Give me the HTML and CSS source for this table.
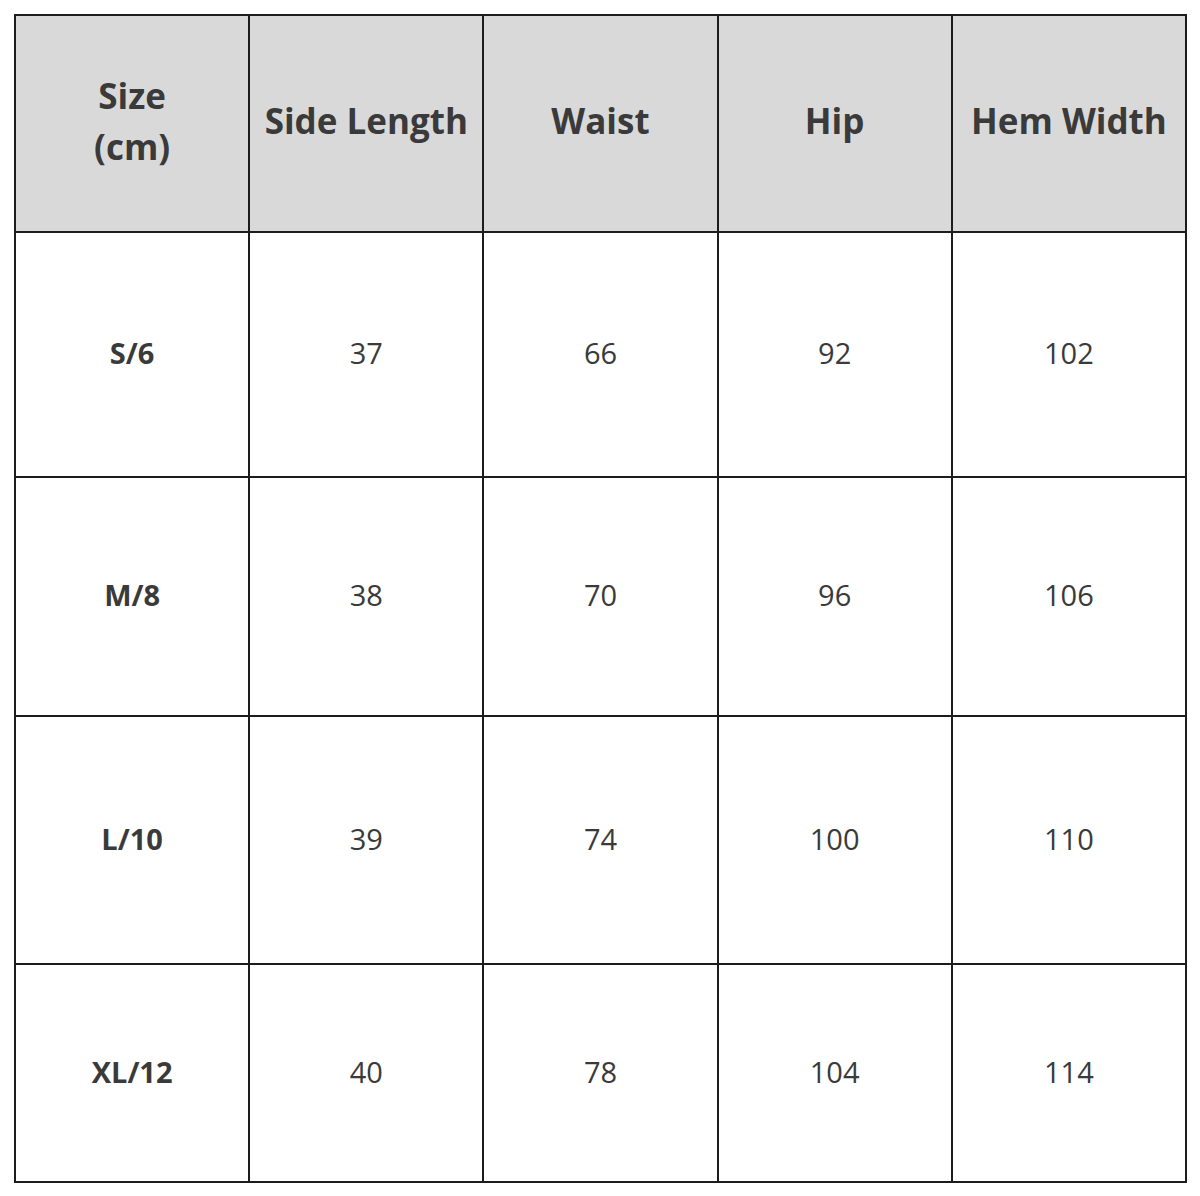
FILE: index.html
```html
<!DOCTYPE html>
<html>
<head>
<meta charset="utf-8">
<link rel="stylesheet" href="styles.css">
</head>
<body>
<table class="size-table">
  <colgroup>
    <col><col><col><col><col>
  </colgroup>
  <thead>
    <tr class="head-row">
      <th>Size<br>(cm)</th>
      <th>Side Length</th>
      <th>Waist</th>
      <th>Hip</th>
      <th>Hem Width</th>
    </tr>
  </thead>
  <tbody>
    <tr class="row-1"><td class="size">S/6</td><td>37</td><td>66</td><td>92</td><td>102</td></tr>
    <tr class="row-2"><td class="size">M/8</td><td>38</td><td>70</td><td>96</td><td>106</td></tr>
    <tr class="row-3"><td class="size">L/10</td><td>39</td><td>74</td><td>100</td><td>110</td></tr>
    <tr class="row-4"><td class="size">XL/12</td><td>40</td><td>78</td><td>104</td><td>114</td></tr>
  </tbody>
</table>
</body>
</html>
```

FILE: styles.css
```css
html, body {
  margin: 0;
  padding: 0;
  background: #ffffff;
}

body {
  padding: 14px 0 0 14px;
  font-family: "Open Sans", "Noto Sans", "DejaVu Sans", sans-serif;
  color: #333333;
}

.size-table {
  width: 1173px;
  table-layout: fixed;
  border-collapse: collapse;
}

.size-table col {
  width: 20%;
}

.size-table th,
.size-table td {
  border: 2px solid #1c1c1c;
  text-align: center;
  vertical-align: middle;
  padding: 0 0 4px 0;
}

.size-table th {
  background: #d9d9d9;
  font-size: 35px;
  font-weight: 700;
  line-height: 51px;
  color: #3a3a3a;
  padding-bottom: 6px;
}

.head-row { height: 217px; }
.row-1 { height: 245px; }
.row-2 { height: 239px; }
.row-3 { height: 248px; }
.row-4 { height: 218px; }

.size-table td {
  font-size: 29px;
  font-weight: 400;
  color: #3a3a3a;
}

.size-table td.size {
  font-weight: 700;
}
```
